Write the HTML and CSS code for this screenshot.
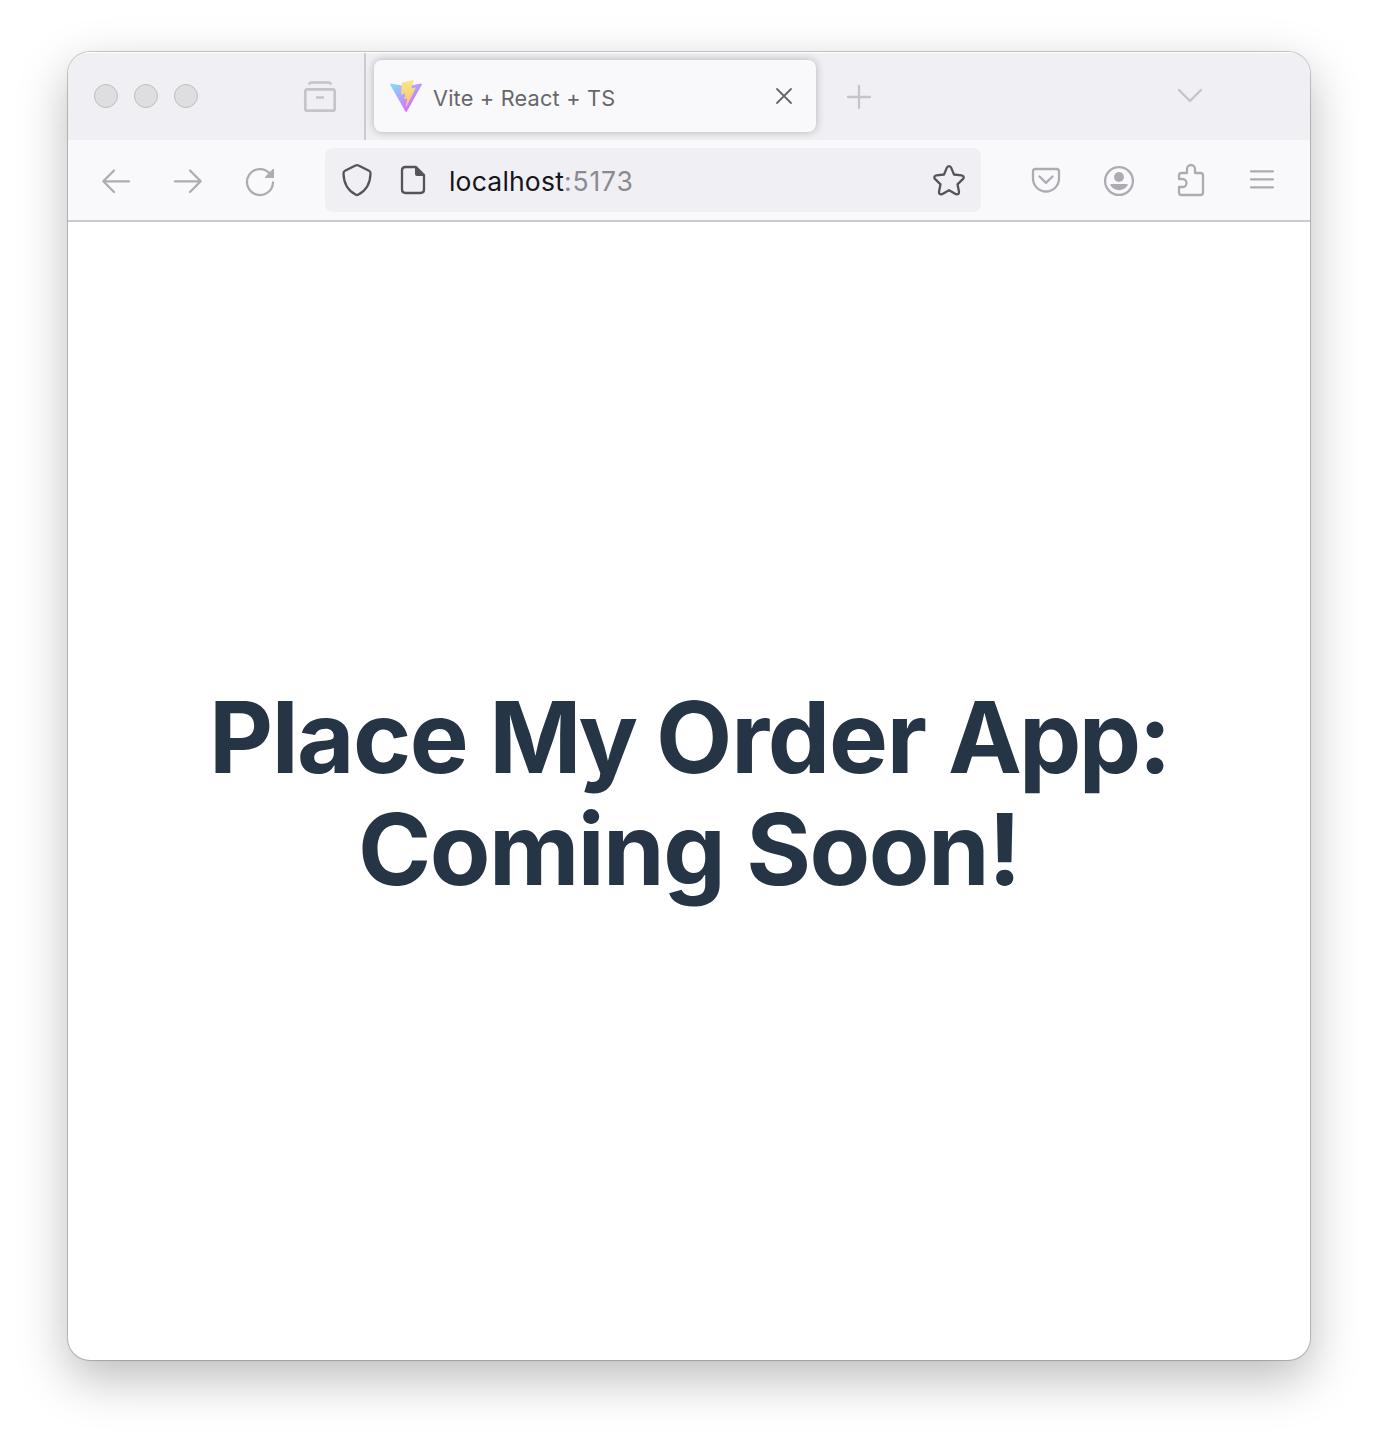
FILE: index.html
```html
<!DOCTYPE html>
<html lang="en">
<head>
<meta charset="utf-8">
<title>Vite + React + TS</title>
<link rel="stylesheet" href="styles.css">
</head>
<body>
<div class="window">
  <header class="tabstrip">
    <div class="lights"><span class="light"></span><span class="light"></span><span class="light"></span></div>
    <svg class="icon pale archive" width="34" height="34" viewBox="303 80 34 34"><path d="M309 84.5Q309.500 82.500 312 82.500H328Q330.500 82.500 331 84.500"/><rect x="305.300" y="89.300" width="29.400" height="21.400" rx="2"/><path d="M316 97.500h8"/></svg>
    <span class="divider"></span>
    <div class="tab">
      <svg class="favicon" width="32" height="32" viewBox="0 0 256 257">
        <defs>
          <linearGradient id="violet" x1="-.828%" x2="57.636%" y1="7.652%" y2="78.411%"><stop offset="0%" stop-color="#41D1FF"/><stop offset="100%" stop-color="#BD34FE"/></linearGradient>
          <linearGradient id="bolt" x1="43.376%" x2="50.316%" y1="2.242%" y2="89.030%"><stop offset="0%" stop-color="#F6E070"/><stop offset="8.333%" stop-color="#F6D84A"/><stop offset="100%" stop-color="#F3B030"/></linearGradient>
        </defs>
        <path fill="url(#violet)" d="M255.153 37.938L134.897 252.976c-2.483 4.440-8.862 4.466-11.382.048L.875 37.958c-2.746-4.814 1.371-10.646 6.827-9.670l120.385 21.517a6.537 6.537 0 0 0 2.322-.004l117.867-21.483c5.438-.991 9.574 4.796 6.877 9.620Z"/>
        <path fill="url(#bolt)" d="M185.432.063L96.440 17.501a3.268 3.268 0 0 0-2.634 3.014l-5.474 92.456a3.268 3.268 0 0 0 3.997 3.378l24.777-5.718c2.318-.535 4.413 1.507 3.936 3.838l-7.361 36.047c-.495 2.426 1.782 4.500 4.151 3.780l15.304-4.649c2.372-.720 4.652 1.360 4.150 3.788l-11.698 56.621c-.732 3.542 3.979 5.473 5.943 2.437l1.313-2.028l72.516-144.720c1.215-2.423-.880-5.186-3.540-4.672l-25.505 4.922c-2.396.462-4.435-1.770-3.759-4.114l16.646-57.705c.677-2.350-1.370-4.583-3.769-4.113Z"/>
      </svg>
      <span class="tab-title">Vite + React + TS</span>
      <svg class="icon close" width="20" height="20" viewBox="774 86 20 20"><path d="M777 89l14 14M791 89l-14 14"/></svg>
    </div>
    <svg class="icon pale plus" width="26" height="26" viewBox="846 84 26 26"><path d="M859 86v22M848 97h22"/></svg>
    <svg class="icon pale chevron" width="28" height="18" viewBox="1176 86 28 18"><path d="M1179 90l11 11 11-11"/></svg>
  </header>
  <nav class="toolbar">
    <svg class="icon mid back" width="32" height="32" viewBox="100 165 32 32"><path d="M129 181.300H103.500M114 170.500l-10.700 10.800L114 192"/></svg>
    <svg class="icon mid forward" width="32" height="32" viewBox="172 165 32 32"><path d="M175 181.300h25.500M190 170.500l10.700 10.800L190 192"/></svg>
    <svg class="icon mid reload" width="32" height="32" viewBox="244 166 32 32"><path d="M273 182.500A13 13 0 1 1 269.800 173.500"/><path class="solid" d="M274 169.500V178H265.500Q264.500 177.500 265.200 176.700L272.800 169Q273.700 168.300 274 169.500Z"/></svg>
    <div class="urlbar">
      <svg class="icon dark shield" width="32" height="34" viewBox="341 163 32 34"><path d="M355.500 165.500Q357 164.600 358.500 165.500L369 170.800Q370.600 171.500 370.500 173.500C370.300 183 366 190.500 358.500 194.600Q357 195.400 355.500 194.600C348 190.500 343.700 183 343.500 173.500Q343.400 171.500 345 170.800Z"/></svg>
      <svg class="icon dark page" width="26" height="30" viewBox="400 165 26 30"><path d="M416 167H405.500Q402 167 402 170.500V189.500Q402 193 405.500 193H420.500Q424 193 424 189.500V175Z"/><path class="solid" d="M415 166.300L424.700 176H417Q415 176 415 174Z"/></svg>
      <span class="url"><span class="host">localhost</span><span class="port">:5173</span></span>
      <svg class="icon dark star" width="34" height="34" viewBox="932 164 34 34"><path d="M947 167.400Q949 164.800 951 167.400L954 174.500L961.500 175.300Q964.700 176 963.300 178.700L957.500 184.300L959 191.700Q959.100 195 956 194.200L949 190.200L942 194.200Q938.900 195 939 191.700L940.500 184.300L934.700 178.700Q933.300 176 936.500 175.300L944 174.500Z"/></svg>
    </div>
    <svg class="icon mid pocket" width="30" height="28" viewBox="1031 166 30 28"><path d="M1035.500 169H1056.500Q1059 169 1059 171.500V178.500A13 13 0 0 1 1033 178.500V171.500Q1033 169 1035.500 169Z"/><path d="M1039.500 176.500l6.500 6.300 6.500-6.300"/></svg>
    <svg class="icon mid account" width="32" height="32" viewBox="1103 165 32 32"><circle cx="1119" cy="181" r="13.900"/><circle class="solid" cx="1119" cy="177" r="5"/><path class="solid" d="M1111.500 184H1126.500Q1128.500 184 1127.500 185.600C1123.500 191.800 1114.500 191.800 1110.500 185.600Q1109.500 184 1111.500 184Z"/></svg>
    <svg class="icon mid puzzle" width="30" height="34" viewBox="1176 163 30 34"><path d="M1179 178V175.500Q1179 173 1181.500 173H1187V169A4 4 0 0 1 1195 169V173H1200.500Q1203 173 1203 175.500V192.500Q1203 195 1200.500 195H1181.500Q1179 195 1179 192.500V187H1182.500A4 4 0 0 0 1182.500 179H1179Z"/></svg>
    <svg class="icon mid menu" width="26" height="24" viewBox="1249 168 26 24"><path d="M1251 171.300h22M1251 179.300h22M1251 187.300h22"/></svg>
  </nav>
  <main class="content"><h1 class="headline">Place <span class="tight">My</span> <span class="open">Order</span> <span class="snug">App:</span><br>Coming Soon!</h1></main>
</div>
</body>
</html>
```
FILE: styles.css
```css
* { box-sizing: border-box; }
body { margin: 0; height: 1444px; padding: 52px 68px 84px; background: #fff; font-family: Inter, "Liberation Sans", sans-serif; overflow: hidden; }
svg { display: block; flex: none; }
.window { height: 1308px; display: flex; flex-direction: column; border-radius: 22px; overflow: hidden; background: #fff; box-shadow: 0 0 0 1px rgba(0,0,0,.17), 0 0 3px rgba(0,0,0,.08), 0 18px 50px rgba(0,0,0,.27); }

.icon { fill: none; stroke-width: 2.300; stroke-linecap: round; stroke-linejoin: round; }
.pale { stroke: #c5c4ca; }
.mid { stroke: #adacb3; color: #adacb3; }
.dark { stroke: #55545b; color: #55545b; }
.solid { fill: currentColor; stroke: none; }

.tabstrip { height: 88px; flex: none; display: flex; align-items: flex-start; background: #f0eff4; box-shadow: inset 0 2px 1px -1px #fff; }
.lights { display: flex; gap: 16px; padding: 32px 0 0 26px; width: 235px; }
.light { width: 24px; height: 24px; border-radius: 50%; background: #dedee0; border: 1px solid #bebec0; }
.archive { margin-top: 28px; stroke-width: 2.700; stroke-linecap: butt; }
.divider { width: 2px; height: 87px; margin: 1px 0 0 27px; background: #cbcbd0; }
.tab { height: 72px; width: 442px; margin: 8px 0 0 8px; padding: 0 22px 0 16px; display: flex; align-items: center; background: #f9f9fc; border-radius: 8px; box-shadow: 0 0 8px rgba(0,0,0,.26); }
.favicon { opacity: .65; }
.tab-title { flex: 1; margin-left: 11px; padding-top: 3px; font-size: 21.700px; letter-spacing: .2px; line-height: 28px; color: #67676a; white-space: nowrap; }
.close { stroke: #67676c; stroke-width: 1.800; }
.plus { margin: 32px 0 0 30px; }
.chevron { margin: 34px 0 0 304px; }

.toolbar { height: 82px; flex: none; display: flex; align-items: flex-start; padding-left: 32px; background: #f9f9fc; border-bottom: 2px solid #cbcbcd; }
.back, .forward { margin: 25px 40px 0 0; }
.reload { margin-top: 26px; }
.urlbar { width: 656px; height: 64px; margin: 8px 50px 0 49px; padding: 0 15px 0 16px; display: flex; align-items: center; background: #f0eff4; border-radius: 8px; }
.page { margin-left: 27px; }
.url { margin-left: 23px; padding-top: 2px; font-size: 26.500px; line-height: 34px; white-space: nowrap; }
.host { color: #15141a; letter-spacing: .200px; }
.port { color: #8b8a90; letter-spacing: .850px; }
.star { margin-left: auto; margin-top: 2px; }
.pocket { margin: 26px 42px 0 0; }
.account { margin: 25px 41px 0 0; }
.puzzle { margin: 23px 43px 0 0; }
.menu { margin-top: 28px; }

.content { flex: 1; display: flex; align-items: center; justify-content: center; padding-top: 4px; }
.headline { margin: 0; font-size: 99px; line-height: 112px; font-weight: 700; letter-spacing: -1.500px; color: #263545; text-align: center; white-space: nowrap; }
.tight { letter-spacing: -4px; }
.open { letter-spacing: -1.200px; }
.snug { letter-spacing: -2.700px; }
```
